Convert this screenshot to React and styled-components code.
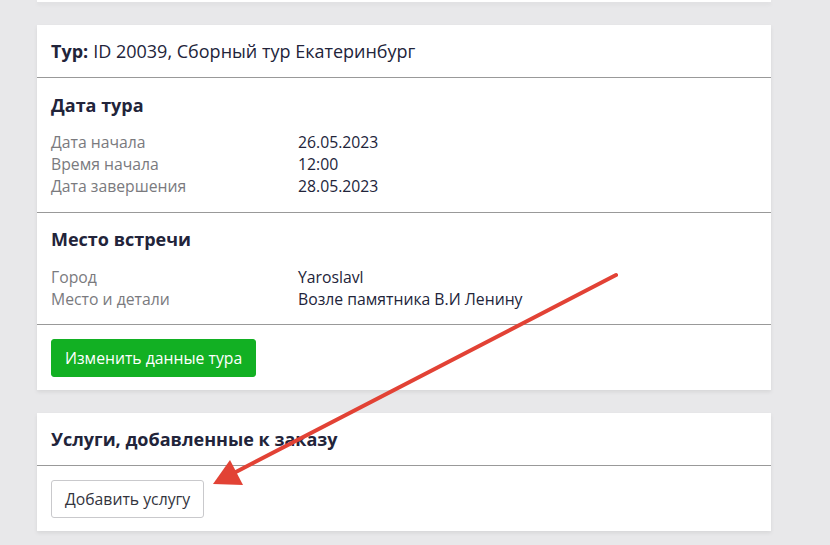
import React from "react";
import styled, { createGlobalStyle } from "styled-components";

const Global = createGlobalStyle`
  html, body {
    margin: 0;
    padding: 0;
    background: #e8e8ea;
    font-family: "Open Sans", "Noto Sans", sans-serif;
    color: #22243a;
  }
`;

const Page = styled.main`
  position: relative;
  width: 830px;
  height: 545px;
  overflow: hidden;
  padding-left: 37px;
  box-sizing: border-box;
  display: flex;
  flex-direction: column;
  gap: 23px;
`;

const Card = styled.section`
  width: 734px;
  background: #fff;
  box-shadow: 0 2px 4px rgba(0, 0, 0, 0.08);
  flex-shrink: 0;
  height: ${(p) => (p.$stub ? "2px" : "auto")};
`;

const CardHead = styled.div`
  padding: 0 14px;
  height: 52px;
  display: flex;
  align-items: center;
  border-bottom: 1px solid #999;
  font-size: 18px;

  b {
    font-weight: 700;
    margin-right: 5px;
  }
`;

const Section = styled.div`
  padding: ${(p) => (p.$first ? "15px 14px 15px" : "14px 14px 14px")};
  border-bottom: 1px solid #999;
`;

const SectionTitle = styled.h3`
  margin: 0 0 ${(p) => (p.$first ? "14px" : "15px")};
  font-size: 18px;
  font-weight: 700;
  line-height: 24px;
`;

const InfoGrid = styled.div`
  display: grid;
  grid-template-columns: 247px 1fr;
  font-size: 15.75px;
  line-height: 22px;
`;

const Label = styled.span`
  color: #7a7a7e;
`;

const Value = styled.span`
  color: #22243a;
`;

const Actions = styled.div`
  padding: 14px 14px 13px;
`;

const Button = styled.button`
  font-family: "Open Sans", "Noto Sans", sans-serif;
  font-size: 15.75px;
  height: 38px;
  padding: 0 13px;
  border-radius: 3px;
  cursor: pointer;
  background: ${(p) => (p.$primary ? "#12b023" : "#fff")};
  color: ${(p) => (p.$primary ? "#fff" : "#33343d")};
  border: 1px solid ${(p) => (p.$primary ? "#12b023" : "#c9c9cc")};
`;

const Arrow = styled.svg`
  position: absolute;
  left: 0;
  top: 0;
  pointer-events: none;
`;

const tourDates = [
  ["Дата начала", "26.05.2023"],
  ["Время начала", "12:00"],
  ["Дата завершения", "28.05.2023"],
];

const meeting = [
  ["Город", "Yaroslavl"],
  ["Место и детали", "Возле памятника В.И Ленину"],
];

const Rows = ({ items }) => (
  <InfoGrid>
    {items.map(([l, v]) => (
      <React.Fragment key={l}>
        <Label>{l}</Label>
        <Value>{v}</Value>
      </React.Fragment>
    ))}
  </InfoGrid>
);

const App = () => (
  <>
    <Global />
    <Page>
      <Card $stub />
      <Card>
        <CardHead>
          <b>Тур:</b> ID 20039, Сборный тур Екатеринбург
        </CardHead>
        <Section $first>
          <SectionTitle $first>Дата тура</SectionTitle>
          <Rows items={tourDates} />
        </Section>
        <Section>
          <SectionTitle>Место встречи</SectionTitle>
          <Rows items={meeting} />
        </Section>
        <Actions>
          <Button $primary>Изменить данные тура</Button>
        </Actions>
      </Card>
      <Card>
        <CardHead>
          <b>Услуги, добавленные к заказу</b>
        </CardHead>
        <Actions>
          <Button>Добавить услугу</Button>
        </Actions>
      </Card>
      <Arrow width="830" height="545" viewBox="0 0 830 545">
        <line x1="616" y1="275" x2="232" y2="474" stroke="#e24235" strokeWidth="4" strokeLinecap="round" />
        <polygon points="213,484 230,460 243,485" fill="#e24235" />
      </Arrow>
    </Page>
  </>
);

export default App;
